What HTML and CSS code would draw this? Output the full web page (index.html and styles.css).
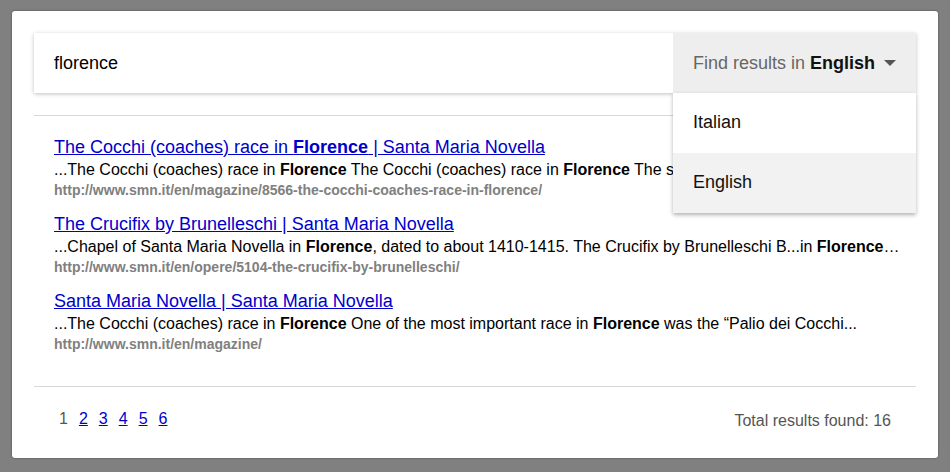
FILE: index.html
```html
<!DOCTYPE html>
<html lang="en">
<head>
  <meta charset="UTF-8" />
  <meta name="viewport" content="width=device-width, initial-scale=1.0"/>
  <title>Search</title>
  <link rel="stylesheet" href="styles.css">
</head>
<body>

  <main class="search-panel">

    <!-- search bar -->
    <form class="search-bar" onsubmit="return false">
      <input type="text" class="search-input" id="query" value="florence" aria-label="Search" />
      <div class="language">
        <button type="button" class="language-button" aria-haspopup="true" aria-expanded="true" aria-controls="language-menu">
          <span>Find results in <b id="language-name">English</b></span>
          <svg class="arrow" width="12" height="6" viewBox="0 0 12 6"><path d="M0 0h12L6 6z"/></svg>
        </button>
        <ul class="language-menu" id="language-menu">
          <li><button type="button" class="language-option">Italian</button></li>
          <li><button type="button" class="language-option selected">English</button></li>
        </ul>
      </div>
    </form>

    <!-- results -->
    <section class="results">
      <article class="result">
        <h3><a href="#">The Cocchi (coaches) race in <b>Florence</b> | Santa Maria Novella</a></h3>
        <p class="snippet">...The Cocchi (coaches) race in <b>Florence</b> The Cocchi (coaches) race in <b>Florence</b> The so</p>
        <p class="url">http://www.smn.it/en/magazine/8566-the-cocchi-coaches-race-in-florence/</p>
      </article>
      <article class="result">
        <h3><a href="#">The Crucifix by Brunelleschi | Santa Maria Novella</a></h3>
        <p class="snippet">...Chapel of Santa Maria Novella in <b>Florence</b>, dated to about 1410-1415. The Crucifix by Brunelleschi B...in <b>Florence</b>…</p>
        <p class="url">http://www.smn.it/en/opere/5104-the-crucifix-by-brunelleschi/</p>
      </article>
      <article class="result">
        <h3><a href="#">Santa Maria Novella | Santa Maria Novella</a></h3>
        <p class="snippet">...The Cocchi (coaches) race in <b>Florence</b> One of the most important race in <b>Florence</b> was the “Palio dei Cocchi...</p>
        <p class="url">http://www.smn.it/en/magazine/</p>
      </article>
    </section>

    <!-- pagination -->
    <footer class="results-footer">
      <nav class="pages" aria-label="Pages">
        <span>1</span>
        <a href="#">2</a>
        <a href="#">3</a>
        <a href="#">4</a>
        <a href="#">5</a>
        <a href="#">6</a>
      </nav>
      <p class="total">Total results found: 16</p>
    </footer>

  </main>

  <script>
    const button = document.querySelector(".language-button");
    const menu = document.getElementById("language-menu");

    function toggleMenu() {
      menu.hidden = !menu.hidden;
      button.setAttribute("aria-expanded", String(!menu.hidden));
    }

    button.addEventListener("click", toggleMenu);

    document.querySelectorAll(".language-option").forEach(function (option) {
      option.addEventListener("click", function () {
        document.querySelector(".language-option.selected").classList.remove("selected");
        option.classList.add("selected");
        document.getElementById("language-name").textContent = option.textContent;
        toggleMenu();
      });
    });
  </script>

</body>
</html>
```

FILE: styles.css
```css
* {
  box-sizing: border-box;
}

body {
  margin: 0;
  padding: 11px 12px 14px;
  background-color: #808080;
  font-family: "Liberation Sans", Arial, sans-serif;
  color: #000;
}

h3, p, ul {
  margin: 0;
  padding: 0;
}

.search-panel {
  padding: 22px;
  background-color: #fff;
  border-radius: 3px;
  box-shadow: 0 0 2px rgba(0, 0, 0, 0.5);
}

.search-bar {
  display: flex;
  height: 60px;
  margin-bottom: 22px;
  box-shadow: 0 1px 4px rgba(0, 0, 0, 0.25);
}

.search-input {
  flex: 1;
  min-width: 0;
  padding: 0 20px;
  border: none;
  outline: none;
  background: transparent;
  font-family: inherit;
  font-size: 18px;
}

.language {
  position: relative;
  display: flex;
}

.language-button {
  display: flex;
  align-items: center;
  gap: 9px;
  padding: 0 20px;
  border: none;
  background-color: #eee;
  font-family: inherit;
  font-size: 18px;
  color: #666;
  cursor: pointer;
}

.language-button b {
  color: #111;
}

.arrow {
  fill: #555;
}

.language-menu {
  position: absolute;
  top: 100%;
  left: 0;
  width: 100%;
  list-style: none;
  background-color: #fff;
  box-shadow: 0 2px 4px rgba(0, 0, 0, 0.3);
}

.language-option {
  display: block;
  width: 100%;
  height: 60px;
  padding: 0 20px 2px;
  border: none;
  background: transparent;
  font-family: inherit;
  font-size: 18px;
  text-align: left;
  color: #111;
  cursor: pointer;
}

.language-option.selected,
.language-option:hover {
  background-color: #f2f2f2;
}

.results {
  display: flex;
  flex-direction: column;
  gap: 13px;
  padding: 19px 10px 33px 20px;
  border-top: 1px solid #d8d8d8;
  border-bottom: 1px solid #d8d8d8;
}

.result h3 {
  font-size: 18px;
  font-weight: normal;
  line-height: 24px;
}

a {
  color: #0000cc;
}

.snippet {
  font-size: 16px;
  line-height: 22px;
  white-space: nowrap;
  overflow: hidden;
  text-overflow: ellipsis;
}

.url {
  font-size: 14px;
  font-weight: bold;
  line-height: 18px;
  color: #808080;
}

.results-footer {
  display: flex;
  justify-content: space-between;
  padding: 20px 25px 1px;
  font-size: 16px;
  line-height: 24px;
  color: #555;
}

.pages {
  display: flex;
  gap: 11px;
}

.total {
  line-height: 28px;
}
```
